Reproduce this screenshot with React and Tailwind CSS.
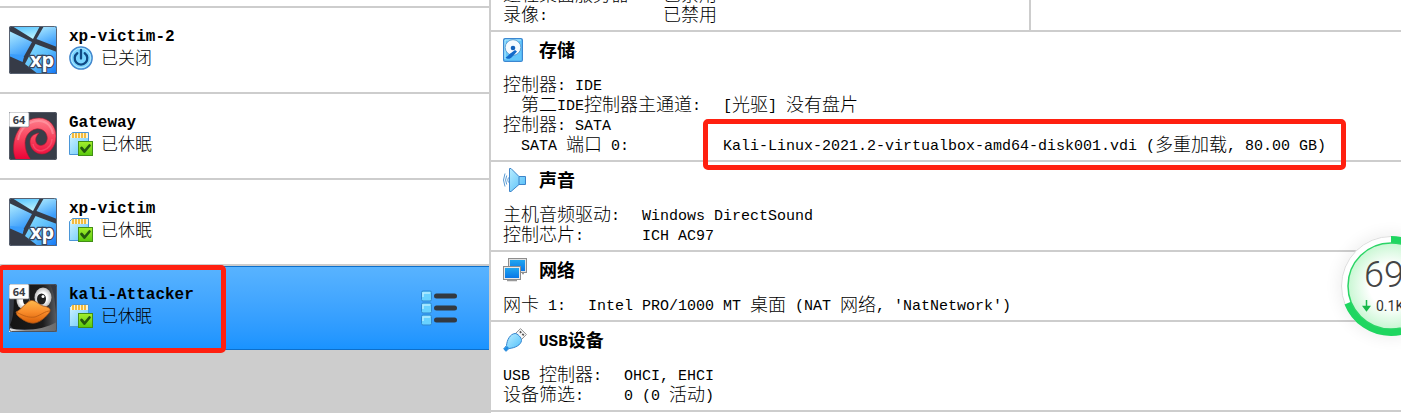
import React, { useId } from "react";

const MONO = "font-['Liberation_Mono','Noto_Sans_CJK_SC',monospace]";

/* Sets Chinese runs two half-widths wide beside the Latin text. */
function Mixed({ children }) {
  return children
    .split(/([\u3000-\u9fff]+)/)
    .filter(Boolean)
    .map((run, i) =>
      /[\u3000-\u9fff]/.test(run) ? (
        <span key={i} className="align-[-1px] text-[18px] leading-[0]">{run}</span>
      ) : (
        run
      )
    );
}

function Badge64() {
  return (
    <g>
      <rect x="0" y="0" width="20" height="15" rx="1.5" fill="#fff" stroke="#777b84" strokeWidth="0.7" />
      <text x="10" y="11.6" textAnchor="middle" fontFamily="Open Sans, sans-serif" fontSize="11" fontWeight="700" fill="#3b3f48">64</text>
    </g>
  );
}

function XpIcon() {
  const id = useId();
  return (
    <svg width="48" height="48" viewBox="0 0 48 48" aria-hidden="true">
      <defs>
        <linearGradient id={id + "a"} x1="0" y1="0" x2="1" y2="1">
          <stop offset="0" stopColor="#8fe2ff" />
          <stop offset="0.5" stopColor="#5cbdfb" />
          <stop offset="1" stopColor="#0f74f6" />
        </linearGradient>
        <linearGradient id={id + "b"} x1="0" y1="0" x2="0.3" y2="1">
          <stop offset="0" stopColor="#4fc0ff" />
          <stop offset="1" stopColor="#b4f0ff" />
        </linearGradient>
        <linearGradient id={id + "c"} x1="0" y1="0" x2="0.4" y2="1">
          <stop offset="0" stopColor="#b4efff" />
          <stop offset="1" stopColor="#3b9dfb" />
        </linearGradient>
      </defs>
      <rect width="48" height="48" rx="2" fill="#363b47" />
      <path d="M3 0H31L24 13Z" fill={`url(#${id}b)`} />
      <path d="M35 0H48V21L27.500 13Z" fill={`url(#${id}c)`} />
      <path d="M0 5L23 16 14 32 15 31 0 30Z" fill={`url(#${id}c)`} />
      <path d="M0 29L15 31 13.500 36 0 30Z" fill="#3a9dfb" />
      <path d="M0 28L14 29 14 35.500 0 28Z" fill="#3a9dfb" />
      <path d="M26.500 18L48 26V48H29L16 38Z" fill={`url(#${id}a)`} />
      <text x="33" y="41" textAnchor="middle" fontFamily="Open Sans, sans-serif" fontSize="20" fontWeight="700" fill="#fff" stroke="#38465f" strokeWidth="2.5" paintOrder="stroke">xp</text>
      <rect x="0.5" y="0.5" width="47" height="47" rx="2" fill="none" stroke="#596272" />
    </svg>
  );
}

function DebianIcon() {
  const id = useId();
  return (
    <svg width="48" height="48" viewBox="0 0 48 48" aria-hidden="true">
      <defs>
        <linearGradient id={id} gradientUnits="userSpaceOnUse" x1="0" y1="6" x2="0" y2="48">
          <stop offset="0" stopColor="#ff7f8c" />
          <stop offset="0.5" stopColor="#f7405b" />
          <stop offset="1" stopColor="#ea0036" />
        </linearGradient>
      </defs>
      <rect width="48" height="48" rx="2" fill="#383e49" />
      <path
        d="M7 48C3 40 4 27 9 19C14 10 22 6 30 6C40 6 47 14 47 24C47 35 40 42 33 42C26 42 21 36 21 30C21 25 24 22 30 21C27 24 26 27 27 30C28 33 31 34 34 33C37 32 39 28 38 24C37 19 32 16 27 17C21 18 16 24 16 31C16 37 18 43 22 48Z"
        fill={`url(#${id})`}
        stroke="#b9152f"
        strokeWidth="0.6"
      />
      <path d="M9 28C11 16 20 9 30 9C38 9 43 15 44 22" fill="none" stroke="#ffb2ba" strokeOpacity="0.45" strokeWidth="2" />
      <path d="M24 32C25 38 31 40 35 38C40 36 43 32 43 27" fill="none" stroke="#ff8a98" strokeOpacity="0.35" strokeWidth="1.5" />
      <rect x="0.5" y="0.5" width="47" height="47" rx="2" fill="none" stroke="#535965" />
      <Badge64 />
    </svg>
  );
}

function TuxIcon() {
  const id = useId();
  return (
    <svg width="48" height="48" viewBox="0 0 48 48" aria-hidden="true">
      <defs>
        <linearGradient id={id + "o"} x1="0" y1="0" x2="0" y2="1">
          <stop offset="0" stopColor="#ffb84c" />
          <stop offset="0.5" stopColor="#f98d2b" />
          <stop offset="1" stopColor="#d96008" />
        </linearGradient>
        <radialGradient id={id + "e"}>
          <stop offset="0.5" stopColor="#fff" />
          <stop offset="1" stopColor="#b9b9b9" />
        </radialGradient>
        <linearGradient id={id + "g"} x1="0" y1="0" x2="1" y2="0">
          <stop offset="0" stopColor="#efefef" />
          <stop offset="0.35" stopColor="#8a8a8a" />
          <stop offset="1" stopColor="#6a6a6a" />
        </linearGradient>
        <linearGradient id={id + "h"} x1="0" y1="0" x2="1" y2="0">
          <stop offset="0" stopColor="#141414" />
          <stop offset="0.7" stopColor="#1c1c1c" />
          <stop offset="1" stopColor="#5c5f64" />
        </linearGradient>
      </defs>
      <rect width="48" height="48" rx="2" fill="#343841" />
      <path d="M7 0H41C47 12 46 28 48 36V45H4L1 41C7 29 3 14 7 0Z" fill={`url(#${id}h)`} />
      <path d="M0 44C14 48 34 46 48 38V48H0Z" fill={`url(#${id}g)`} />
      <ellipse cx="14" cy="16" rx="6.5" ry="9" fill={`url(#${id}e)`} />
      <ellipse cx="34" cy="13.5" rx="8.5" ry="10" fill={`url(#${id}e)`} />
      <ellipse cx="32.5" cy="15" rx="4.5" ry="5.5" fill="#202020" />
      <circle cx="34" cy="12.5" r="1.5" fill="#fff" />
      <ellipse cx="17" cy="16" rx="3" ry="5" fill="#202020" />
      <path d="M7 28C12 26 17 18 22 16.500C26 16 29 20 34 22C40 23 43 25 40 29C35 35 29 40 22 39C16 38 11 34 8 31Z" fill={`url(#${id}o)`} stroke="#a65317" strokeWidth="0.8" />
      <path d="M8 28.500C15 32 20 34 26 33C32 31 36 27 41 27" fill="none" stroke="#c46216" strokeWidth="1" />
      <rect x="0.5" y="0.5" width="47" height="47" rx="2" fill="none" stroke="#4c535e" />
      <Badge64 />
    </svg>
  );
}

function PowerIcon() {
  return (
    <svg width="24" height="24" viewBox="0 0 24 24" fill="none" aria-hidden="true">
      <circle cx="12" cy="12" r="11.2" fill="#62c8fb" stroke="#4687cc" strokeWidth="1.3" />
      <circle cx="12" cy="12" r="9.7" fill="#7ad5ff" stroke="#b9eaff" strokeWidth="1" />
      <path d="M8.3 7.2A6.3 6.3 0 1 0 15.700 7.2M12 4V12.500" stroke="#104a85" strokeWidth="2.3" strokeLinecap="round" />
    </svg>
  );
}

function SavedIcon() {
  const id = useId();
  return (
    <svg width="24" height="24" viewBox="0 0 24 24" aria-hidden="true">
      <defs>
        <linearGradient id={id + "c"} x1="0" y1="0" x2="1" y2="1">
          <stop offset="0" stopColor="#d4f5ff" />
          <stop offset="1" stopColor="#61c4fa" />
        </linearGradient>
        <linearGradient id={id + "k"} x1="0" y1="0" x2="0" y2="1">
          <stop offset="0" stopColor="#a5ef2d" />
          <stop offset="1" stopColor="#58c80e" />
        </linearGradient>
      </defs>
      <path d="M3.5 0.5H19.5V22.5H0.5V3.5Z" fill={`url(#${id}c)`} stroke="#4a96d8" />
      <path d="M3 1H19V6H2V3Z" fill="#fff2cf" />
      <path d="M4 1V6M7 1V6M10 1V6M13 1V6M16 1V6" stroke="#f1b52f" strokeWidth="1.8" />
      <rect x="9.5" y="9.5" width="14" height="14" fill={`url(#${id}k)`} stroke="#428f16" />
      <path d="M12.5 16L15.5 19.5 20.5 13.5" fill="none" stroke="#24580e" strokeWidth="2.7" strokeLinecap="round" strokeLinejoin="round" />
    </svg>
  );
}

function ListIcon() {
  return (
    <svg width="36" height="36" viewBox="0 0 36 36" aria-hidden="true">
      {[6, 18, 30].map((y) => (
        <g key={y}>
          <rect x="0.5" y={y - 5} width="10" height="10" rx="1.5" fill="#69d2ff" stroke="#3087cf" />
          <path d={`M2 ${y + 1}V${y - 3}H9`} fill="none" stroke="#b6edff" strokeWidth="1.5" />
          <rect x="13" y={y - 2.5} width="23" height="5" rx="2.5" fill="#333940" />
        </g>
      ))}
    </svg>
  );
}

function StorageIcon() {
  return (
    <svg width="24" height="24" viewBox="0 0 24 24" aria-hidden="true">
      <rect x="0.6" y="0.6" width="18.8" height="22.8" rx="1.5" fill="#62c7fb" stroke="#3c87d1" strokeWidth="1.2" />
      <path d="M2 21V2H18" fill="none" stroke="#b9edff" />
      <circle cx="10" cy="9.5" r="7.8" fill="#f5fbff" stroke="#5292c8" strokeWidth="0.8" />
      <circle cx="10" cy="10" r="2.3" fill="#1261bb" />
      <path d="M12 12L14 13.500 9 19C7 21.500 4 21 2.5 19.500C5 18.500 6 16 8 15Z" fill="#126bcb" />
    </svg>
  );
}

function SoundIcon() {
  const id = useId();
  return (
    <svg width="24" height="24" viewBox="0 0 24 24" fill="none" aria-hidden="true">
      <defs>
        <linearGradient id={id} x1="0" y1="0" x2="1" y2="1">
          <stop offset="0" stopColor="#b9edff" />
          <stop offset="1" stopColor="#4dbbf8" />
        </linearGradient>
      </defs>
      <path d="M6.5 0.5H8L16 8.5H22.5V16.5H16L8 23.5H6.5Z" fill={`url(#${id})`} stroke="#3e85ca" />
      <path d="M16 8.5V16.5" stroke="#3e85ca" />
      <path d="M5.5 9.500Q4 12 5.500 14.500M3.700 7.500Q1.500 12 3.700 16.500M2 5.500Q-1 12 2 18.500" stroke="#5a9bd3" />
    </svg>
  );
}

function NetworkIcon() {
  const id = useId();
  return (
    <svg width="24" height="24" viewBox="0 0 24 24" aria-hidden="true">
      <defs>
        <linearGradient id={id} x1="0" y1="0" x2="0" y2="1">
          <stop offset="0" stopColor="#21a6ef" />
          <stop offset="1" stopColor="#0876e7" />
        </linearGradient>
      </defs>
      <rect x="5.5" y="0.5" width="18" height="14" fill="#e0e0e0" stroke="#8d8d8d" />
      <rect x="7" y="2" width="15" height="11" fill={`url(#${id})`} />
      <rect x="0.5" y="8.5" width="17" height="13" fill="#e8e8e8" stroke="#8d8d8d" />
      <rect x="2" y="10" width="14" height="10" fill={`url(#${id})`} />
      <path d="M4 22.5H14M19 15.5H21" stroke="#999" strokeWidth="1.5" />
    </svg>
  );
}

function UsbIcon() {
  const id = useId();
  return (
    <svg width="24" height="24" viewBox="0 0 24 24" aria-hidden="true">
      <defs>
        <linearGradient id={id} x1="0" y1="0" x2="1" y2="1">
          <stop offset="0" stopColor="#c8f2ff" />
          <stop offset="1" stopColor="#46bcfb" />
        </linearGradient>
      </defs>
      <path d="M12.5 5.5L17.5 0.6 23.4 6.5 18.5 11.5Z" fill="#f7f7f7" stroke="#909090" />
      <path d="M16.8 3.3L18.3 4.8M19.3 5.8L20.8 7.3" stroke="#555" strokeWidth="1.7" />
      <path d="M12 5.500C14 5 19 10 18.500 12.500C18 17 12 20 6 20.500L3 23.300 0.700 21 3.500 17.500C4 12 7 6 12 5.500Z" fill={`url(#${id})`} stroke="#3485cf" />
      <path d="M0.7 21L4 18 6 20 3 23.300Z" fill="#218de2" />
    </svg>
  );
}

const MACHINES = [
  { name: "xp-victim-2", state: "已关闭", Os: XpIcon, State: PowerIcon },
  { name: "Gateway", state: "已休眠", Os: DebianIcon, State: SavedIcon },
  { name: "xp-victim", state: "已休眠", Os: XpIcon, State: SavedIcon },
  { name: "kali-Attacker", state: "已休眠", Os: TuxIcon, State: SavedIcon, selected: true },
];

const SECTIONS = [
  {
    title: "存储",
    Icon: StorageIcon,
    rows: [
      { label: "控制器: IDE" },
      { label: "第二IDE控制器主通道:", value: "[光驱] 没有盘片", sub: true },
      { label: "控制器: SATA" },
      {
        label: "SATA 端口 0:",
        value: "Kali-Linux-2021.2-virtualbox-amd64-disk001.vdi (多重加载, 80.00 GB)",
        sub: true,
        marked: true,
      },
    ],
  },
  {
    title: "声音",
    Icon: SoundIcon,
    rows: [
      { label: "主机音频驱动:", value: "Windows DirectSound" },
      { label: "控制芯片:", value: "ICH AC97" },
    ],
  },
  {
    title: "网络",
    Icon: NetworkIcon,
    rows: [{ label: "网卡 1:", value: "Intel PRO/1000 MT 桌面 (NAT 网络, 'NatNetwork')" }],
  },
  {
    title: "USB设备",
    Icon: UsbIcon,
    rows: [
      { label: "USB 控制器:", value: "OHCI, EHCI" },
      { label: "设备筛选:", value: "0 (0 活动)" },
    ],
  },
];

function Machine({ name, state, Os, State, selected }) {
  return (
    <li
      className={
        "relative flex items-start gap-3 px-[9px] " +
        (selected
          ? "border-y border-[#0d6fca] bg-linear-to-b from-[#58b3ff] to-[#1993ff] py-[17px]"
          : "bg-white py-[18px]")
      }
    >
      <Os />
      <div>
        <h2 className="h-5 text-base leading-[22px] font-bold">{name}</h2>
        <p className="flex h-6 items-center gap-2 text-[17px] font-light">
          <State />
          <span className="pt-[3px]">{state}</span>
        </p>
      </div>
      {selected && (
        <>
          <button type="button" aria-label="菜单" className="mr-[23px] ml-auto self-center">
            <ListIcon />
          </button>
          <div className="pointer-events-none absolute -top-0.5 -left-0.5 h-[88px] w-[228px] rounded-[5px] border-[5px] border-[#ff2010]" />
        </>
      )}
    </li>
  );
}

function Rows({ rows }) {
  return (
    <table className="border-collapse text-[15px] leading-5 font-light whitespace-pre">
      <tbody>
        {rows.map(({ label, value, sub, marked }) => (
          <tr key={label}>
            <th scope="row" className={"p-0 pr-[22px] text-left font-light " + (sub ? "pl-[18px]" : "")}>
              <Mixed>{label}</Mixed>
            </th>
            <td className="p-0">
              {value && (
                <div className="relative">
                  <Mixed>{value}</Mixed>
                  {marked && (
                    <div className="pointer-events-none absolute -inset-x-5 -top-[18px] -bottom-[13px] rounded-[5px] border-[5px] border-[#ff2010]" />
                  )}
                </div>
              )}
            </td>
          </tr>
        ))}
      </tbody>
    </table>
  );
}

function Section({ title, Icon, rows }) {
  return (
    <section className="bg-white px-3 pt-1.5 pb-[3px]">
      <h2 className="mb-[15px] flex h-6 items-center gap-3 text-base leading-6 font-bold">
        <Icon />
        <span className="pt-1"><Mixed>{title}</Mixed></span>
      </h2>
      <Rows rows={rows} />
    </section>
  );
}

function SpeedBall() {
  return (
    <div className="absolute top-[236px] -right-10 size-[100px] rounded-full bg-white shadow-[0_0_16px_2px_rgba(0,0,0,0.07)]">
      <svg width="100" height="100" viewBox="0 0 100 100" role="img" aria-label="69">
        <defs>
          <radialGradient id="ball">
            <stop offset="0.5" stopColor="#fff" />
            <stop offset="1" stopColor="#c9f7d3" />
          </radialGradient>
        </defs>
        <circle cx="50" cy="50" r="49.5" fill="#fff" stroke="#ddd" />
        <circle cx="50" cy="50" r="46.5" fill="none" stroke="#1fd660" strokeWidth="7" pathLength="100" strokeDasharray="69 31" transform="rotate(-90 50 50)" />
        <circle cx="50" cy="50" r="43" fill="url(#ball)" stroke="#2bd566" strokeWidth="1.5" />
        <text x="23" y="51" fontFamily="Roboto, sans-serif" fontSize="36" fontWeight="300" fill="#444">69</text>
        <path d="M25.5 64V74M22.5 70.5L25.5 74.5 28.5 70.5Z" fill="#18b84b" stroke="#18b84b" strokeWidth="1.5" />
        <text x="35" y="75" fontFamily="Roboto, sans-serif" fontSize="14" fill="#333">0.1K</text>
      </svg>
    </div>
  );
}

export default function App() {
  return (
    <div className={"relative flex min-h-screen overflow-hidden bg-[#cdcdcd] text-black " + MONO}>
      <aside className="w-[35%] max-w-[489px] shrink-0">
        <ul className="flex flex-col gap-0.5">
          <li className="h-1.5 bg-white" />
          {MACHINES.map((m) => (
            <Machine key={m.name} {...m} />
          ))}
        </ul>
      </aside>
      <main className="ml-0.5 flex min-w-0 flex-1 flex-col gap-0.5">
        <div className="flex h-[30px] gap-0.5">
          <div className="flex w-[538px] flex-col justify-end overflow-hidden bg-white px-3 pb-[3px]">
            <table className="border-collapse text-[15px] leading-5 font-light whitespace-pre">
              <tbody>
                <tr>
                  <th scope="row" className="w-40 p-0 text-left font-light"><Mixed>远程桌面服务器:</Mixed></th>
                  <td className="p-0"><Mixed>已禁用</Mixed></td>
                </tr>
                <tr>
                  <th scope="row" className="w-40 p-0 text-left font-light"><Mixed>录像:</Mixed></th>
                  <td className="p-0"><Mixed>已禁用</Mixed></td>
                </tr>
              </tbody>
            </table>
          </div>
          <div className="flex-1 bg-white" />
        </div>
        {SECTIONS.map((s) => (
          <Section key={s.title} {...s} />
        ))}
        <div className="flex-1 bg-white" />
      </main>
      <SpeedBall />
    </div>
  );
}
